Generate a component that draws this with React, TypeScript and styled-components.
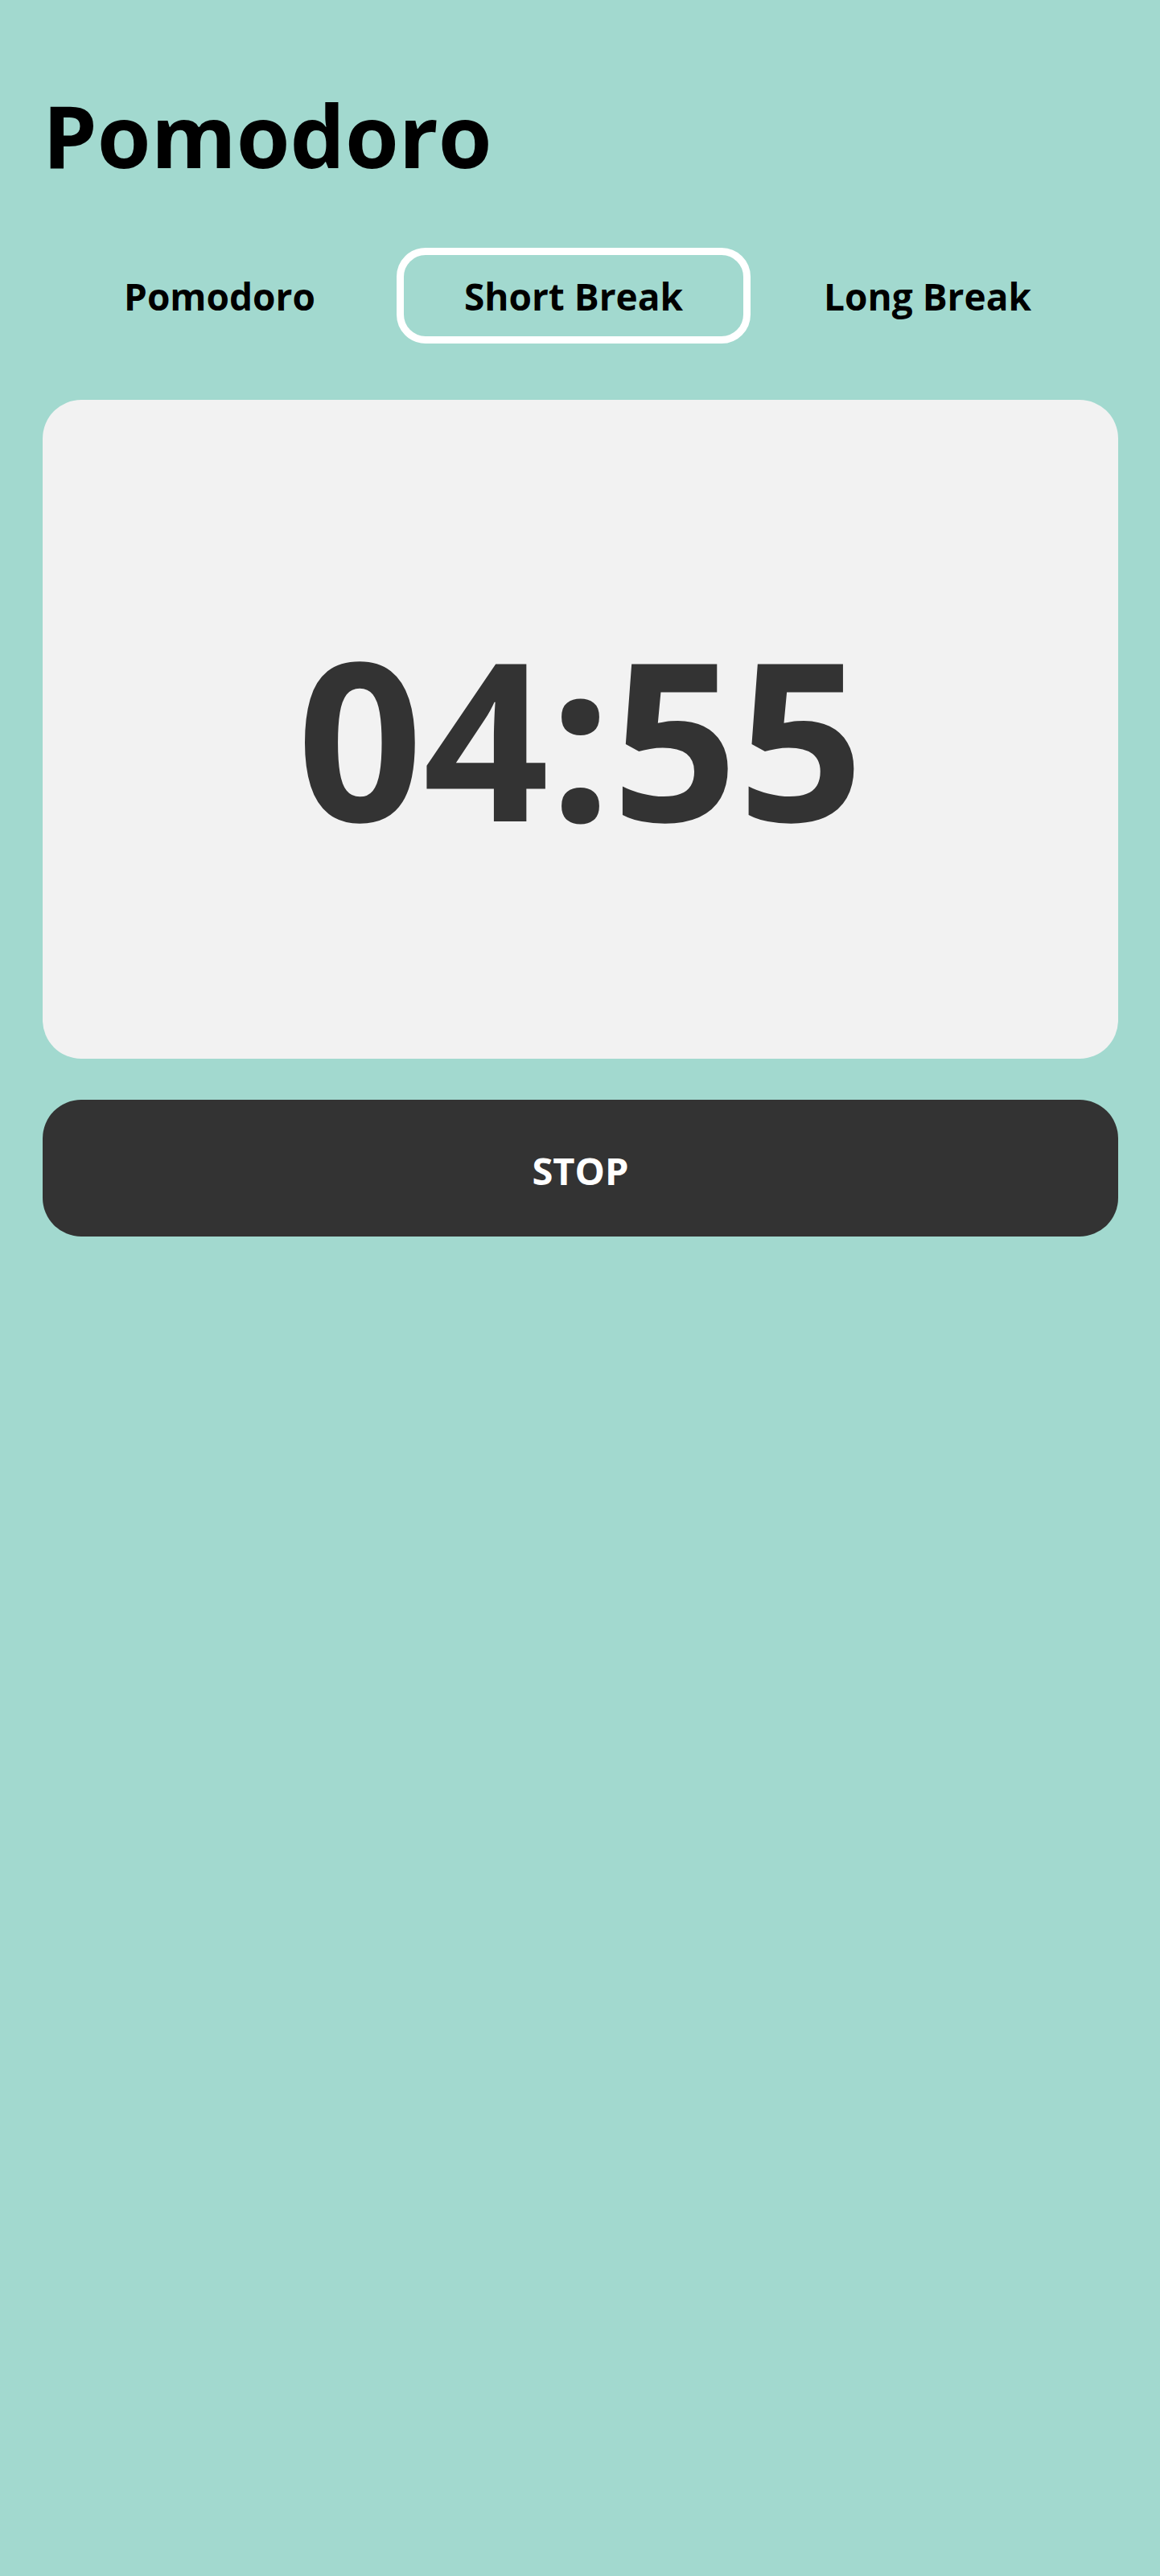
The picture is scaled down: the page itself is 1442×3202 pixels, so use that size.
import { useState } from "react"
import styled, { createGlobalStyle } from "styled-components"

const BG = "#a2d9cf"
const DARK = "#333333"

const GlobalStyle = createGlobalStyle`
  html, body {
    margin: 0;
    padding: 0;
    background: ${BG};
    font-family: "Open Sans", "Noto Sans", sans-serif;
  }
  * {
    box-sizing: border-box;
  }
`

const Page = styled.main`
  min-height: 3202px;
  background: ${BG};
  padding: 114px 52px 0 53px;
`

const Title = styled.h1`
  margin: 0;
  font-size: 108px;
  line-height: 1;
  font-weight: 700;
  color: #000;
`

const Tabs = styled.nav`
  display: grid;
  grid-template-columns: repeat(3, 440px);
  margin-top: 86px;
`

const Tab = styled.button<{ active?: boolean }>`
  height: 119px;
  border: 9px solid ${(p) => (p.active ? "#fff" : "transparent")};
  border-radius: 36px;
  background: transparent;
  font-family: inherit;
  font-size: 46px;
  line-height: 1;
  font-weight: 700;
  color: #000;
  cursor: pointer;
  padding: 0;
`

const TimerCard = styled.section`
  margin-top: 70px;
  height: 819px;
  background: #f2f2f2;
  border-radius: 48px;
  display: flex;
  align-items: center;
  justify-content: center;
  padding-top: 16px;
`

const Time = styled.div`
  font-size: 274px;
  line-height: 1;
  font-weight: 700;
  color: ${DARK};
`

const StopButton = styled.button`
  display: block;
  width: 100%;
  margin-top: 51px;
  height: 170px;
  border: none;
  border-radius: 48px;
  background: ${DARK};
  color: #fff;
  font-family: inherit;
  font-size: 47px;
  line-height: 1;
  font-weight: 700;
  padding: 7px 0 0;
  cursor: pointer;
`

const MODES = ["Pomodoro", "Short Break", "Long Break"]

export default function App() {
  const [mode, setMode] = useState(1)

  return (
    <>
      <GlobalStyle />
      <Page>
        <Title>Pomodoro</Title>
        <Tabs>
          {MODES.map((m, i) => (
            <Tab key={m} active={mode === i} onClick={() => setMode(i)}>
              {m}
            </Tab>
          ))}
        </Tabs>
        <TimerCard>
          <Time>04:55</Time>
        </TimerCard>
        <StopButton>STOP</StopButton>
      </Page>
    </>
  )
}
